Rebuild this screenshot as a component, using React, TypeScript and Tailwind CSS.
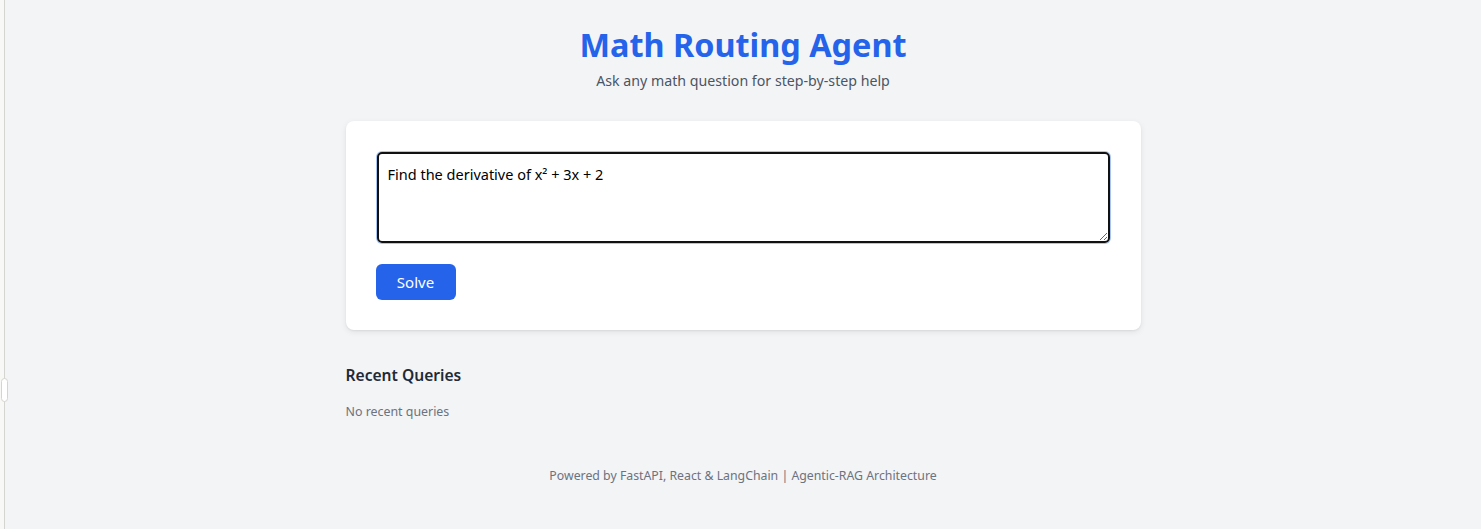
import React, { useEffect, useRef, useState } from 'react';

export default function App() {
  const [query, setQuery] = useState('Find the derivative of x² + 3x + 2');
  const inputRef = useRef<HTMLTextAreaElement>(null);

  useEffect(() => {
    const el = inputRef.current;
    if (el) {
      el.focus();
      el.setSelectionRange(el.value.length, el.value.length);
    }
  }, []);

  return (
    <div className="flex min-h-[529px] bg-[#f3f4f6]" style={{ fontFamily: '"Noto Sans", "Open Sans", sans-serif' }}>
      {/* side panel edge */}
      <div className="relative w-[5px] shrink-0 bg-[#f8f8f6] border-r border-[#d4d4d0]">
        <div className="absolute left-[1px] top-[378px] w-[7px] h-[24px] rounded-full bg-white border border-[#d6d4cf]" />
      </div>

      <div className="flex-1 flex flex-col items-center pt-[24px]">
        <header className="text-center">
          <h1 className="text-[32.4px] leading-[40px] font-bold text-[#2563eb]">Math Routing Agent</h1>
          <p className="mt-[7px] text-[14.2px] leading-[20px] text-[#4b5563]">Ask any math question for step-by-step help</p>
        </header>

        <main className="w-[795px] mt-[30px]">
          <div className="bg-white rounded-lg shadow-[0_2px_6px_rgba(0,0,0,0.08),0_1px_2px_rgba(0,0,0,0.06)] p-[30px]">
            <textarea
              ref={inputRef}
              value={query}
              onChange={(e) => setQuery(e.target.value)}
              rows={3}
              className="block w-[733px] mx-[1px] mt-[1px] h-[91px] px-[9px] pt-[10px] pb-[8px] text-[14.5px] leading-[20px] text-black border-2 border-[#111111] rounded-[5px] shadow-[0_0_0_1px_#a9c4f2] outline-none focus:outline-none"
            />
            <button className="mt-[21px] w-[80px] h-[36px] bg-[#2563eb] text-white text-[15px] rounded-md">
              Solve
            </button>
          </div>

          <section className="mt-[33px]">
            <h2 className="text-[15.6px] leading-[24px] font-semibold text-[#1f2937]">Recent Queries</h2>
            <p className="mt-[15px] text-[12.4px] leading-[20px] text-[#6b7280]">No recent queries</p>
          </section>
        </main>

        <footer className="mt-[44px] text-[12.3px] leading-[20px] text-[#6b7280] text-center">
          Powered by FastAPI, React &amp; LangChain | Agentic-RAG Architecture
        </footer>
      </div>
    </div>
  );
}
